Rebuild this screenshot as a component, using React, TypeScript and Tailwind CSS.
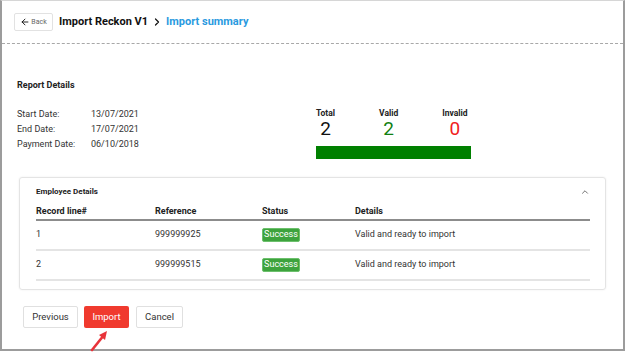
import { ArrowLeft, ChevronRight, ChevronUp } from "lucide-react";

const DETAILS = [
  { label: "Start Date:", value: "13/07/2021" },
  { label: "End Date:", value: "17/07/2021" },
  { label: "Payment Date:", value: "06/10/2018" },
];

const ROWS = [
  { line: "1", reference: "999999925", status: "Success", details: "Valid and ready to import" },
  { line: "2", reference: "999999515", status: "Success", details: "Valid and ready to import" },
];

export default function App() {
  return (
    <div className="w-[626px] h-[353px] bg-white font-['Roboto',sans-serif] text-[#222] relative overflow-hidden">
      <div className="w-[625px] h-[351px] border-l-2 border-r-2 border-b-2 border-t border-l-[#9c9c9c] border-r-[#9c9c9c] border-b-[#9c9c9c] border-t-[#d6d6d6] flex flex-col">
        {/* header */}
        <div className="h-[43px] shrink-0 border-b border-dashed border-[#a8a8a8] flex items-center pl-[12px]">
          <button
            type="button"
            className="w-[39px] h-[18px] border border-[#e2e2e2] rounded-[2px] flex items-center justify-center gap-[1px] text-[7px] text-[#666]"
          >
            <ArrowLeft className="w-[10px] h-[10px] text-[#111]" strokeWidth={2.2} />
            Back
          </button>
          <span className="ml-[6px] text-[11px] font-bold text-[#111]">Import Reckon V1</span>
          <ChevronRight className="ml-[3px] w-[12px] h-[12px] text-[#111]" strokeWidth={2.4} />
          <span className="ml-[3px] text-[11px] font-bold text-[#2a9ae0]">Import summary</span>
        </div>

        {/* report details */}
        <div className="pl-[15px] pt-[36px]">
          <div className="text-[9px] font-bold leading-[11px]">Report Details</div>
          <div className="flex mt-[16px]">
            <div className="w-[299px] flex flex-col">
              {DETAILS.map((d) => (
                <div key={d.label} className="flex h-[15px] items-center text-[9px] text-[#333]">
                  <span className="w-[74px]">{d.label}</span>
                  <span>{d.value}</span>
                </div>
              ))}
            </div>
            <div className="flex flex-col">
              <div className="flex gap-[44px] mt-[1px]">
                <div className="flex flex-col items-center">
                  <span className="text-[8.5px] font-bold leading-[11px]">Total</span>
                  <span className="text-[19px] leading-[20px] text-[#111]">2</span>
                </div>
                <div className="flex flex-col items-center">
                  <span className="text-[8.5px] font-bold leading-[11px]">Valid</span>
                  <span className="text-[19px] leading-[20px] text-[#128012]">2</span>
                </div>
                <div className="flex flex-col items-center">
                  <span className="text-[8.5px] font-bold leading-[11px]">Invalid</span>
                  <span className="text-[19px] leading-[20px] text-[#f02020]">0</span>
                </div>
              </div>
              <div className="mt-[7px] w-[155px] h-[13px] bg-[#008000]" />
            </div>
          </div>
        </div>

        {/* employee details card */}
        <div className="ml-[17px] mt-[18px] w-[587px] h-[113px] border border-[#e4e4e4] rounded-[3px] shadow-[0_0_2px_rgba(0,0,0,0.08)] px-[16px] pt-[8px]">
          <div className="flex items-center justify-between h-[12px]">
            <span className="text-[8px] font-bold text-[#222]">Employee Details</span>
            <ChevronUp className="w-[10px] h-[10px] text-[#666] mr-[-1px]" strokeWidth={2.2} />
          </div>
          <div className="w-[554px] mt-[6px]">
            <div className="flex h-[17px] items-center border-b-2 border-[#8c8c8c] text-[9px] font-bold">
              <span className="w-[119px]">Record line#</span>
              <span className="w-[107px]">Reference</span>
              <span className="w-[93px]">Status</span>
              <span>Details</span>
            </div>
            {ROWS.map((r) => (
              <div key={r.line} className="flex h-[30px] items-center border-b-2 border-[#e4e4e4] text-[9px] text-[#333]">
                <span className="w-[119px]">{r.line}</span>
                <span className="w-[107px]">{r.reference}</span>
                <span className="w-[93px]">
                  <span className="inline-flex items-center justify-center w-[38px] h-[14px] bg-[#3da33d] border border-[#6cc06c] rounded-[2px] text-white text-[9px]">
                    {r.status}
                  </span>
                </span>
                <span>{r.details}</span>
              </div>
            ))}
          </div>
        </div>

        {/* actions */}
        <div className="flex pl-[21px] mt-[16px]">
          <button type="button" className="w-[55px] h-[22px] border border-[#e0e0e0] rounded-[2px] text-[9.5px] text-[#333]">
            Previous
          </button>
          <button type="button" className="ml-[6px] w-[45px] h-[22px] bg-[#f03a2e] rounded-[2px] text-[9.5px] text-white">
            Import
          </button>
          <button type="button" className="ml-[7px] w-[47px] h-[22px] border border-[#e0e0e0] rounded-[2px] text-[9.5px] text-[#333]">
            Cancel
          </button>
        </div>
      </div>

      {/* annotation arrow */}
      <svg className="absolute left-[88px] top-[329px]" width="24" height="24" viewBox="0 0 24 24">
        <line x1="4" y1="21" x2="16" y2="6" stroke="#e8333a" strokeWidth="2.6" strokeLinecap="round" />
        <polygon points="19,2 11,6 17,11" fill="#e8333a" />
      </svg>
    </div>
  );
}
